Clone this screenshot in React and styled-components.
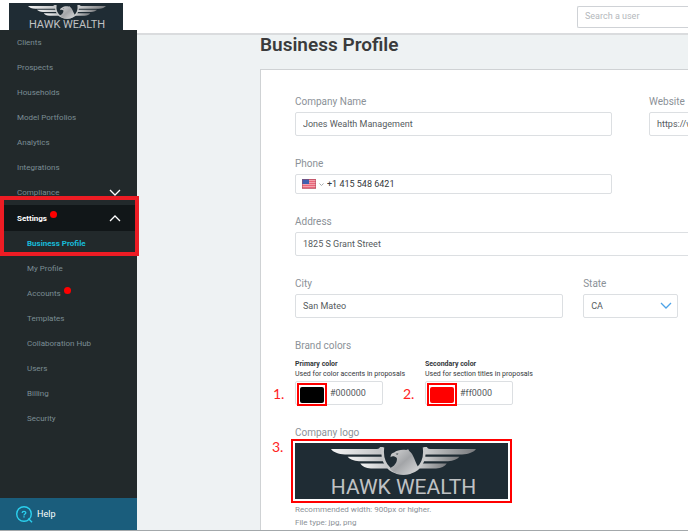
import React, { useState } from "react";
import styled, { createGlobalStyle } from "styled-components";

const GlobalStyle = createGlobalStyle`
  * {
    box-sizing: border-box;
  }

  body {
    margin: 0;
    background: #eef2f3;
    font-family: Roboto, sans-serif;
    overflow: hidden;
  }

  input,
  select,
  button {
    font-family: inherit;
  }
`;

const Page = styled.div`
  display: grid;
  grid-template-columns: 137px minmax(0, 1fr);
  height: 100vh;
  border-bottom: 1px solid #a3a8ab;
  overflow: hidden;
`;

const Sidebar = styled.aside`
  position: relative;
  z-index: 1;
  display: flex;
  flex-direction: column;
  min-height: 0;
  background: #22292b;
`;

const LogoSlot = styled.div`
  height: 30px;
  padding: 3px 14px 0 9px;
  background: #fff;
`;

const LogoBox = styled.div`
  display: flex;
  flex-direction: column;
  align-items: center;
  height: ${(props) => (props.$large ? "56px" : "27px")};
  padding-top: ${(props) => (props.$large ? "4px" : "2px")};
  padding-left: ${(props) => (props.$large ? "4px" : "2px")};
  background: #1f2c34;
  color: #c0c2c4;
  font-size: ${(props) => (props.$large ? "21px" : "11px")};
  line-height: ${(props) => (props.$large ? "24px" : "12px")};
  overflow: hidden;
`;

const LogoBird = styled.svg`
  flex: none;
  width: ${(props) => (props.$large ? "145px" : "78px")};
  height: ${(props) => (props.$large ? "28px" : "14px")};
`;

const Nav = styled.nav`
  flex: 1;
`;

const NavItem = styled.a`
  display: flex;
  align-items: center;
  height: 25px;
  padding-left: ${(props) => (props.$sub ? "27px" : "17px")};
  padding-right: 16px;
  color: ${(props) => (props.$active ? "#18b9d8" : "#7b8d94")};
  font-size: 8px;
  font-weight: ${(props) => (props.$active ? 700 : 400)};
  text-decoration: none;
`;

const NavToggle = styled.button`
  display: flex;
  align-items: center;
  width: 100%;
  height: ${(props) => (props.$open ? "26px" : "25px")};
  padding: 0 16px 0 ${(props) => (props.$open ? "14px" : "17px")};
  border: 0;
  border-left: ${(props) => (props.$open ? "3px solid #2ba5b8" : "0")};
  background: ${(props) => (props.$open ? "#111618" : "transparent")};
  color: ${(props) => (props.$open ? "#fff" : "#7b8d94")};
  font-size: 8px;
  font-weight: ${(props) => (props.$open ? 700 : 400)};

  svg {
    margin-left: auto;
  }
`;

const Dot = styled.span`
  width: 7px;
  height: 7px;
  margin: 0 0 7px 3px;
  border-radius: 50%;
  background: #f00;
`;

const NavGroup = styled.div`
  position: relative;
`;

const Highlight = styled.span`
  position: absolute;
  inset: ${(props) => props.$inset};
  border: ${(props) => props.$width} solid ${(props) => props.$color || "#f00"};
  pointer-events: none;
`;

const HelpLink = styled.a`
  display: flex;
  align-items: center;
  gap: 4px;
  height: 32px;
  padding-left: 16px;
  background: #1a5d7c;
  color: #fff;
  font-size: 9px;
  text-decoration: none;
`;

const Main = styled.main`
  min-width: 0;
  overflow: hidden;
`;

const TopBar = styled.header`
  display: flex;
  justify-content: flex-end;
  height: 35px;
  padding-top: 6px;
  border-bottom: 2px solid #dadcde;
  background: #fff;
`;

const Search = styled.input`
  width: 111px;
  height: 22px;
  padding: 0 7px 2px;
  border: 1px solid #cfd2d6;
  border-right: 0;
  border-radius: 2px 0 0 2px;
  font-size: 9px;
  outline: 0;

  &::placeholder {
    color: #b4b8bc;
  }
`;

const Content = styled.div`
  padding-left: 123px;
`;

const Title = styled.h1`
  margin: 0 0 14px;
  color: #3a3b3c;
  font-size: 19px;
  font-weight: 600;
  line-height: 20px;
`;

const Card = styled.form`
  display: flex;
  flex-direction: column;
  gap: 21px;
  width: max-content;
  min-width: 100%;
  min-height: 100vh;
  padding: 25px 34px;
  border: 1px solid #cfd2d4;
  background: #fff;
`;

const Row = styled.div`
  display: grid;
  grid-template-columns: ${(props) => props.$columns || "1fr"};
  gap: ${(props) => props.$gap || "20px"};
  min-width: 671px;
`;

const Label = styled.label`
  display: block;
  margin-bottom: 3px;
  color: #8b9197;
  font-size: 10px;
  line-height: 14px;
`;

const TextInput = styled.input`
  display: block;
  width: 100%;
  height: 24px;
  padding: 0 7px;
  border: 1px solid #dcdfe2;
  border-radius: 2px;
  background: #fff;
  color: #565b60;
  font-size: 9px;
  outline: 0;
`;

const PhoneBox = styled.div`
  display: flex;
  align-items: center;
  height: 20px;
  padding-left: 6px;
  border: 1px solid #dcdfe2;
  border-radius: 2px;

  input {
    flex: 1;
    min-width: 0;
    margin-left: 3px;
    padding: 0;
    border: 0;
    color: #33373b;
    font-size: 9px;
    outline: 0;
  }
`;

const CountryButton = styled.button`
  display: flex;
  align-items: center;
  gap: 3px;
  padding: 0;
  border: 0;
  background: none;
`;

const SelectBox = styled.div`
  position: relative;

  select {
    width: 100%;
    height: 24px;
    padding: 0 7px;
    border: 1px solid #dcdfe2;
    border-radius: 2px;
    background: #fff;
    color: #565b60;
    font-size: 9px;
    appearance: none;
    outline: 0;
  }

  svg {
    position: absolute;
    top: 8px;
    right: 6px;
    pointer-events: none;
  }
`;

const Group = styled.fieldset`
  min-width: 0;
  margin: 0;
  padding: 0;
  border: 0;
`;

const Legend = styled.legend`
  margin-bottom: ${(props) => (props.$tight ? "0" : "6px")};
  padding: 0;
  color: #8b9197;
  font-size: 10px;
  line-height: 14px;
`;

const ColorTitle = styled.label`
  display: block;
  color: #33373b;
  font-size: 7px;
  font-weight: 700;
  line-height: 10px;
`;

const Hint = styled.p`
  margin: 0;
  color: ${(props) => (props.$light ? "#8b9197" : "#33373b")};
  font-size: ${(props) => (props.$light ? "8px" : "7px")};
  line-height: ${(props) => (props.$light ? "13px" : "10px")};
  white-space: nowrap;
`;

const ColorBox = styled.div`
  position: relative;
  display: flex;
  align-items: center;
  width: 88px;
  height: 24px;
  margin-top: 2px;
  padding-left: 4px;
  border: 1px solid #dcdfe2;
  border-radius: 2px;

  input[type="color"] {
    width: 24px;
    height: 16px;
    margin-top: 3px;
    padding: 0;
    border: 0;
    border-radius: 2px;
    background: none;
    appearance: none;
    overflow: hidden;
  }

  input::-webkit-color-swatch-wrapper {
    padding: 0;
  }

  input::-webkit-color-swatch {
    border: 0;
  }

  input[type="text"] {
    flex: 1;
    min-width: 0;
    padding: 0 0 0 6px;
    border: 0;
    color: #565b60;
    font-size: 9px;
    outline: 0;
  }
`;

const Step = styled.span`
  position: absolute;
  top: ${(props) => props.$top};
  left: ${(props) => props.$left};
  color: #f22;
  font-family: Lato, sans-serif;
  font-size: 14px;
  line-height: 18px;
`;

const LogoPreview = styled.div`
  position: relative;
  width: 221px;
  margin: -1px 0 0 -4px;
  padding: 4px;
`;

const Chevron = ({ up, color = "#fff", width = 12, height = 7 }) => (
  <svg width={width} height={height} viewBox="0 0 12 7" fill="none">
    <path
      d={up ? "M1 6 L6 1 L11 6" : "M1 1 L6 6 L11 1"}
      stroke={color}
      strokeWidth={width < 12 ? 2.4 : 1.3}
    />
  </svg>
);

const Flag = () => (
  <svg width="14" height="10" viewBox="0 0 14 10">
    <rect width="14" height="10" fill="#f3a0ab" />
    {[0, 2, 4, 6, 8].map((y) => (
      <rect key={y} y={y} width="14" height="1" fill="#e8667a" />
    ))}
    <rect width="7" height="5" fill="#3f5fb0" />
    <rect x="0.5" y="0.5" width="13" height="9" fill="none" stroke="#a04a5c" strokeOpacity="0.5" />
  </svg>
);

const HelpIcon = () => (
  <svg width="17" height="17" viewBox="0 0 17 17" fill="none" stroke="#2bd0ee">
    <circle cx="8" cy="8" r="7.3" strokeWidth="1.4" />
    <path d="M12.4 12.6 L16 16.2" strokeWidth="1.4" />
    <path d="M6.2 6.9 C6.2 4.8 9.8 4.8 9.8 6.8 C9.8 8.1 8 8 8 9.4" strokeWidth="1.3" />
    <path d="M8 10.2 V11.5" strokeWidth="1.4" />
  </svg>
);

const Wing = ({ fill }) => (
  <g fill={fill}>
    <path d="M0 6 H138 C145 6 146 2 148 0 H160 V23 H42 C22 22 7 16 0 6 Z" />
    <path d="M50 30 H158 V44 H84 C68 43 56 38 50 30 Z" />
    <path d="M88 51 H164 L178 67 H120 C104 66 94 60 88 51 Z" />
  </g>
);

const HawkLogo = ({ large }) => {
  const id = large ? "hawk-large" : "hawk-small";
  return (
    <LogoBox $large={large}>
      <LogoBird $large={large} viewBox="0 0 436 87" preserveAspectRatio="none">
        <defs>
          <linearGradient id={id + "-left"} x1="0" y1="0" x2="1" y2="0">
            <stop offset="0" stopColor="#f4f4f4" />
            <stop offset="1" stopColor="#bfc1c3" />
          </linearGradient>
          <linearGradient id={id + "-right"} x1="0" y1="0" x2="1" y2="0">
            <stop offset="0" stopColor="#77797c" />
            <stop offset="1" stopColor="#cfd1d2" />
          </linearGradient>
          <linearGradient id={id + "-body"} x1="0" y1="0" x2="1" y2="1">
            <stop offset="0" stopColor="#d6d7d8" />
            <stop offset="0.5" stopColor="#a3a5a8" />
            <stop offset="1" stopColor="#d9dadb" />
          </linearGradient>
        </defs>
        <Wing fill={`url(#${id}-left)`} />
        <g transform="translate(436 0) scale(-1 1)">
          <Wing fill={`url(#${id}-right)`} />
        </g>
        <path
          d="M156 1 C151 40 168 81 218 82 C268 81 285 40 280 1"
          fill="#1f2c34"
          stroke="#c9cbcc"
          strokeWidth="8"
        />
        <path
          d="M179 32 C179 22 184 18 190 17 C198 9 214 7 226 9 L232 7 L236 13 C248 22 252 44 262 62 C252 78 236 86 218 86 C200 86 186 78 176 66 C190 60 200 48 198 34 C192 29 184 27 179 32 Z"
          fill={`url(#${id}-body)`}
        />
        <path d="M194 21 L203 20 L199 24 Z" fill="#1f2c34" />
      </LogoBird>
      <span>HAWK WEALTH</span>
    </LogoBox>
  );
};

const links = [
  "Clients",
  "Prospects",
  "Households",
  "Model Portfolios",
  "Analytics",
  "Integrations",
];

const settingsLinks = [
  { name: "My Profile" },
  { name: "Accounts", dot: true },
  { name: "Templates" },
  { name: "Collaboration Hub" },
  { name: "Users" },
  { name: "Billing" },
  { name: "Security" },
];

const Field = ({ id, label, value }) => (
  <div>
    <Label htmlFor={id}>{label}</Label>
    <TextInput id={id} type="text" defaultValue={value} />
  </div>
);

const ColorField = ({ id, step, title, hint, initial }) => {
  const [color, setColor] = useState(initial);
  const onChange = (e) => setColor(e.target.value);

  return (
    <div>
      <ColorTitle htmlFor={id}>{title}</ColorTitle>
      <Hint>{hint}</Hint>
      <ColorBox>
        <Step $top="3px" $left="-23px">{step}</Step>
        <input type="color" aria-label={title} value={color} onChange={onChange} />
        <input type="text" id={id} value={color} onChange={onChange} />
        <Highlight $inset="1px 55px -2px 1px" $width="2px" />
      </ColorBox>
    </div>
  );
};

const App = () => (
  <>
    <GlobalStyle />
    <Page>
      <Sidebar>
        <LogoSlot>
          <HawkLogo />
        </LogoSlot>
        <Nav>
          {links.map((name) => (
            <NavItem key={name} href="#">
              {name}
            </NavItem>
          ))}
          <NavToggle type="button">
            Compliance
            <Chevron />
          </NavToggle>
          <NavGroup>
            <NavToggle type="button" $open>
              Settings
              <Dot />
              <Chevron up />
            </NavToggle>
            <NavItem href="#" $sub $active>
              Business Profile
            </NavItem>
            <Highlight $inset="-9px -2px 0 0" $width="4px" $color="#ed1c24" />
          </NavGroup>
          {settingsLinks.map(({ name, dot }) => (
            <NavItem key={name} href="#" $sub>
              {name}
              {dot && <Dot />}
            </NavItem>
          ))}
        </Nav>
        <HelpLink href="#">
          <HelpIcon />
          Help
        </HelpLink>
      </Sidebar>
      <Main>
        <TopBar>
          <Search type="search" aria-label="Search a user" placeholder="Search a user" />
        </TopBar>
        <Content>
          <Title>Business Profile</Title>
          <Card>
            <Row $columns="1fr 1fr" $gap="37px">
              <Field id="company" label="Company Name" value="Jones Wealth Management" />
              <Field id="website" label="Website" value="https://www." />
            </Row>
            <Row $columns="1fr 1fr" $gap="37px">
              <div>
                <Label htmlFor="phone">Phone</Label>
                <PhoneBox>
                  <CountryButton type="button" aria-label="Country">
                    <Flag />
                    <Chevron color="#a5a9ad" width={5} height={3} />
                  </CountryButton>
                  <input id="phone" type="tel" defaultValue="+1 415 548 6421" />
                </PhoneBox>
              </div>
            </Row>
            <Row>
              <Field id="address" label="Address" value="1825 S Grant Street" />
            </Row>
            <Row $columns="17fr 6fr 17fr">
              <Field id="city" label="City" value="San Mateo" />
              <div>
                <Label htmlFor="state">State</Label>
                <SelectBox>
                  <select id="state" defaultValue="CA">
                    <option>CA</option>
                  </select>
                  <Chevron color="#4da3e8" />
                </SelectBox>
              </div>
            </Row>
            <Group>
              <Legend>Brand colors</Legend>
              <Row $columns="110px 110px">
                <ColorField
                  id="primary"
                  step="1."
                  title="Primary color"
                  hint="Used for color accents in proposals"
                  initial="#000000"
                />
                <ColorField
                  id="secondary"
                  step="2."
                  title="Secondary color"
                  hint="Used for section titles in proposals"
                  initial="#ff0000"
                />
              </Row>
            </Group>
            <Group>
              <Legend $tight>Company logo</Legend>
              <LogoPreview>
                <Step $top="-1px" $left="-19px">3.</Step>
                <HawkLogo large />
                <Highlight $inset="0" $width="2px" />
              </LogoPreview>
              <Hint $light>Recommended width: 900px or higher.</Hint>
              <Hint $light>File type: jpg, png</Hint>
            </Group>
          </Card>
        </Content>
      </Main>
    </Page>
  </>
);

export default App;
